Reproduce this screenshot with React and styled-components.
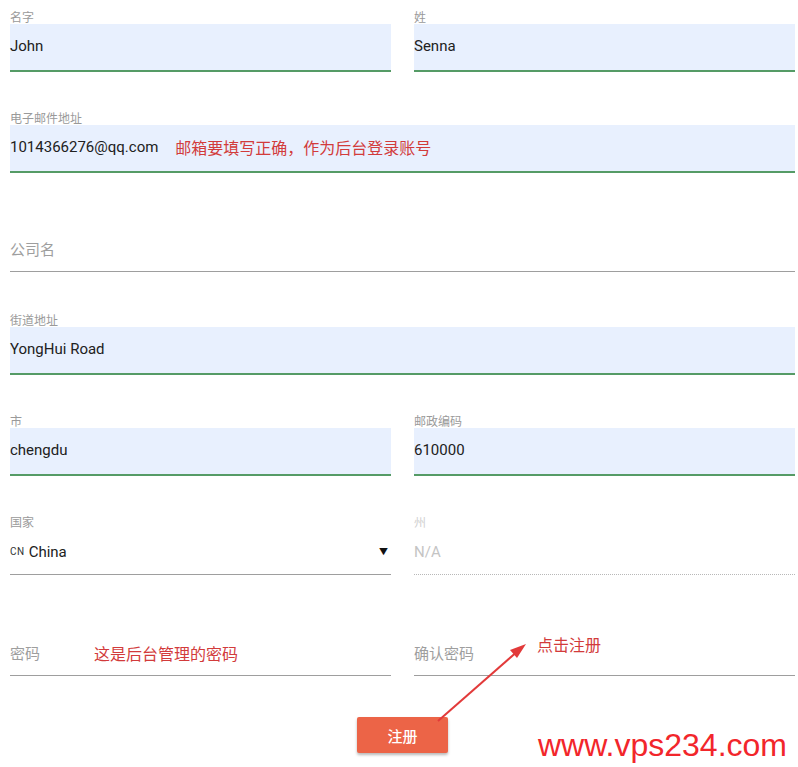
import React from 'react'
import styled, { createGlobalStyle } from 'styled-components'

const font = {
  primary: '"Roboto", "Noto Sans CJK SC", sans-serif',
  cjk: '"Noto Sans CJK SC", "Roboto", sans-serif',
}

const GlobalStyle = createGlobalStyle`
  html, body {
    margin: 0;
    padding: 0;
    background: #fff;
  }
  body {
    font-family: ${font.primary};
  }
`

const Page = styled.div`
  position: relative;
  width: 798px;
  height: 767px;
  overflow: hidden;
  box-sizing: border-box;
  padding: 10px 3px 0 10px;
`

const Form = styled.div`
  display: grid;
  grid-template-columns: 1fr 1fr;
  column-gap: 23px;
  row-gap: 39px;
`

const Field = styled.div`
  display: flex;
  flex-direction: column;
  grid-column: ${props => (props.$wide ? '1 / span 2' : 'auto')};
`

const Label = styled.div`
  height: 14px;
  font-family: ${font.cjk};
  font-size: 12px;
  line-height: 14px;
  color: ${props => (props.$disabled ? '#d0d0d0' : '#9a9a9a')};
  visibility: ${props => (props.$empty ? 'hidden' : 'visible')};
`

const Box = styled.div`
  display: flex;
  align-items: center;
  box-sizing: border-box;
  height: 46px;
  margin-bottom: 2px;
  font-size: 15px;
  color: #212121;
  background: ${props => (props.$filled ? '#e8f0fe' : 'transparent')};
  border-bottom: ${props =>
    props.$filled
      ? '2px solid #559b66'
      : props.$disabled
      ? '1px dotted #b8b8b8'
      : '1px solid #9e9e9e'};
  ${props => props.$filled && 'height: 48px; margin-bottom: 0; padding-bottom: 2px;'}
`

const Value = styled.span`
  font-family: ${font.primary};
  font-size: 15px;
  color: ${props => (props.$disabled ? '#c4c4c4' : '#212121')};
`

const Placeholder = styled.span`
  font-family: ${font.cjk};
  font-size: 15px;
  color: #9e9e9e;
`

const Note = styled.span`
  font-family: ${font.cjk};
  font-size: 16px;
  color: #d23b3b;
  margin-left: ${props => props.$gap || 16}px;
`

const Flag = styled.span`
  font-family: ${font.primary};
  font-size: 10px;
  letter-spacing: 0.5px;
  color: #333;
  margin-right: 4px;
`

const Caret = styled.span`
  margin-left: auto;
  margin-right: 3px;
  font-size: 9px;
  color: #111;
`

const Actions = styled.div`
  display: flex;
  justify-content: center;
  padding-top: 39px;
`

const Button = styled.button`
  width: 91px;
  height: 36px;
  border: none;
  border-radius: 2px;
  background: #ec6447;
  color: #fff;
  font-family: ${font.cjk};
  font-size: 15px;
  font-weight: 500;
  box-shadow: 0 2px 3px rgba(0, 0, 0, 0.28);
  cursor: pointer;
`

const Callout = styled.div`
  position: absolute;
  left: 537px;
  top: 633px;
  font-family: ${font.cjk};
  font-size: 16px;
  line-height: 22px;
  color: #d23b3b;
`

const Arrow = styled.svg`
  position: absolute;
  left: 0;
  top: 0;
  pointer-events: none;
`

const Watermark = styled.div`
  position: absolute;
  left: 538px;
  top: 727px;
  font-family: "Liberation Sans", Arial, sans-serif;
  font-size: 32px;
  line-height: 36px;
  color: #f2262b;
`

const App = () => (
  <>
    <GlobalStyle />
    <Page>
      <Form>
        <Field>
          <Label>名字</Label>
          <Box $filled><Value>John</Value></Box>
        </Field>
        <Field>
          <Label>姓</Label>
          <Box $filled><Value>Senna</Value></Box>
        </Field>
        <Field $wide>
          <Label>电子邮件地址</Label>
          <Box $filled>
            <Value>1014366276@qq.com</Value>
            <Note $gap={17}>邮箱要填写正确，作为后台登录账号</Note>
          </Box>
        </Field>
        <Field $wide>
          <Label $empty>公司名</Label>
          <Box><Placeholder>公司名</Placeholder></Box>
        </Field>
        <Field $wide>
          <Label>街道地址</Label>
          <Box $filled><Value>YongHui Road</Value></Box>
        </Field>
        <Field>
          <Label>市</Label>
          <Box $filled><Value>chengdu</Value></Box>
        </Field>
        <Field>
          <Label>邮政编码</Label>
          <Box $filled><Value>610000</Value></Box>
        </Field>
        <Field>
          <Label>国家</Label>
          <Box>
            <Flag>CN</Flag>
            <Value>China</Value>
            <Caret>▼</Caret>
          </Box>
        </Field>
        <Field>
          <Label $disabled>州</Label>
          <Box $disabled><Value $disabled>N/A</Value></Box>
        </Field>
        <Field>
          <Label $empty>密码</Label>
          <Box>
            <Placeholder>密码</Placeholder>
            <Note $gap={54}>这是后台管理的密码</Note>
          </Box>
        </Field>
        <Field>
          <Label $empty>确认密码</Label>
          <Box><Placeholder>确认密码</Placeholder></Box>
        </Field>
      </Form>
      <Actions>
        <Button>注册</Button>
      </Actions>

      <Callout>点击注册</Callout>
      <Arrow width="798" height="767" viewBox="0 0 798 767">
        <line x1="438" y1="721" x2="519" y2="650" stroke="#e23a3a" strokeWidth="2" />
        <polygon points="526,644 510,650 517,658" fill="#e23a3a" />
      </Arrow>
      <Watermark>www.vps234.com</Watermark>
    </Page>
  </>
)

export default App
